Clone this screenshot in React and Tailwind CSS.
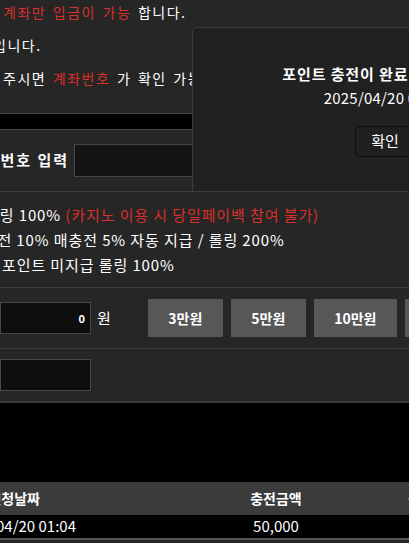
import React from "react";

const FONT = "font-['Noto_Sans_CJK_KR','Noto_Sans',sans-serif]";

function AmountButton({ label, wide }) {
  return (
    <button
      className={`h-[38px] shrink-0 bg-[#575757] text-[14px] font-bold text-white ${wide ? "w-[83px]" : "w-[75px]"}`}
    >
      {label}
    </button>
  );
}

export default function App() {
  return (
    <div className={`relative h-[543px] w-full overflow-hidden bg-[#262626] text-white ${FONT}`}>
      {/* 안내 문구 */}
      <div className="-mt-[4px] text-[14px] leading-[33px] tracking-[1.5px]">
        <div className="whitespace-nowrap pl-[3px] [word-spacing:2px]">
          <span className="text-[#d8302b]">계좌만 입금이 가능</span> 합니다.
        </div>
        <div className="-ml-[7px] whitespace-nowrap">입니다.</div>
        <div className="whitespace-nowrap pl-[3px] [word-spacing:2px]">
          주시면 <span className="text-[#d8302b]">계좌번호</span> 가 확인 가능합니다.
        </div>
      </div>

      <div className="mt-[18px] h-[17px] border-y border-[#474747] bg-black" />

      {/* 계좌번호 입력 */}
      <div className="flex items-center py-[14px]">
        <div className="flex w-[69px] shrink-0 justify-end whitespace-nowrap text-[15px] font-bold tracking-[2px]">
          계좌번호 입력
        </div>
        <div className="ml-[5px] h-[33px] w-[220px] shrink-0 border border-[#464646] bg-[#141414]" />
      </div>

      {/* 보너스 규정 */}
      <div className="border-t border-[#3d3d3d] py-[10px] text-[15px] leading-[25px] tracking-[0.9px]">
        <div className="-ml-[15px] whitespace-nowrap">
          롤링 100% <span className="text-[#d8302b]">(카지노 이용 시 당일페이백 참여 불가)</span>
        </div>
        <div className="-ml-[32px] whitespace-nowrap">첫충전 10% 매충전 5% 자동 지급 / 롤링 200%</div>
        <div className="whitespace-nowrap pl-[2px]">포인트 미지급 롤링 100%</div>
      </div>

      {/* 금액 입력 */}
      <div className="flex items-center border-t border-[#3d3d3d] py-[11px]">
        <div className="flex h-[32px] w-[91px] shrink-0 items-center justify-end border border-[#484848] bg-[#0e0e0e] pr-[5px] text-[11px] font-bold">
          0
        </div>
        <span className="ml-[6px] text-[15px]">원</span>
        <div className="ml-[37px] flex gap-[8px]">
          <AmountButton label="3만원" />
          <AmountButton label="5만원" />
          <AmountButton label="10만원" wide />
          <AmountButton label="30만원" />
        </div>
      </div>

      <div className="border-t border-[#3d3d3d] py-[10px]">
        <div className="h-[32px] w-[91px] border border-[#484848] bg-[#0e0e0e]" />
      </div>

      {/* 신청 내역 */}
      <div className="h-[81px] border-t-2 border-[#3d3d3d] bg-black" />
      <div className="flex h-[33px] items-center bg-[#3b3b3b] text-[14px] font-semibold">
        <div className="flex w-[40px] shrink-0 justify-end whitespace-nowrap">신청날짜</div>
        <div className="ml-[210px] w-[52px] shrink-0 whitespace-nowrap text-center">충전금액</div>
        <div className="ml-[106px] whitespace-nowrap">상태</div>
      </div>
      <div className="flex h-[25px] items-center border-b-2 border-[#555] bg-black text-[15px]">
        <div className="flex w-[76px] shrink-0 justify-end whitespace-nowrap">2025/04/20 01:04</div>
        <div className="ml-[174px] w-[52px] shrink-0 whitespace-nowrap text-center">50,000</div>
      </div>

      {/* 완료 팝업 */}
      <div className="absolute left-[192px] top-[27px] flex h-[165px] w-[386px] flex-col items-center rounded-tl-[5px] border border-[#3c3c3c] bg-[#212121] pt-[34px]">
        <div className="whitespace-nowrap text-[15px] font-bold leading-[24px] tracking-[0.9px]">
          포인트 충전이 완료되었습니다.
        </div>
        <div className="whitespace-nowrap text-[15px] leading-[24px] tracking-[0.2px]">2025/04/20 01:04</div>
        <button className="mt-[16px] h-[31px] w-[60px] rounded-[5px] border border-[#0c0c0c] bg-[#202020] text-[15px] text-white">
          확인
        </button>
      </div>
    </div>
  );
}
